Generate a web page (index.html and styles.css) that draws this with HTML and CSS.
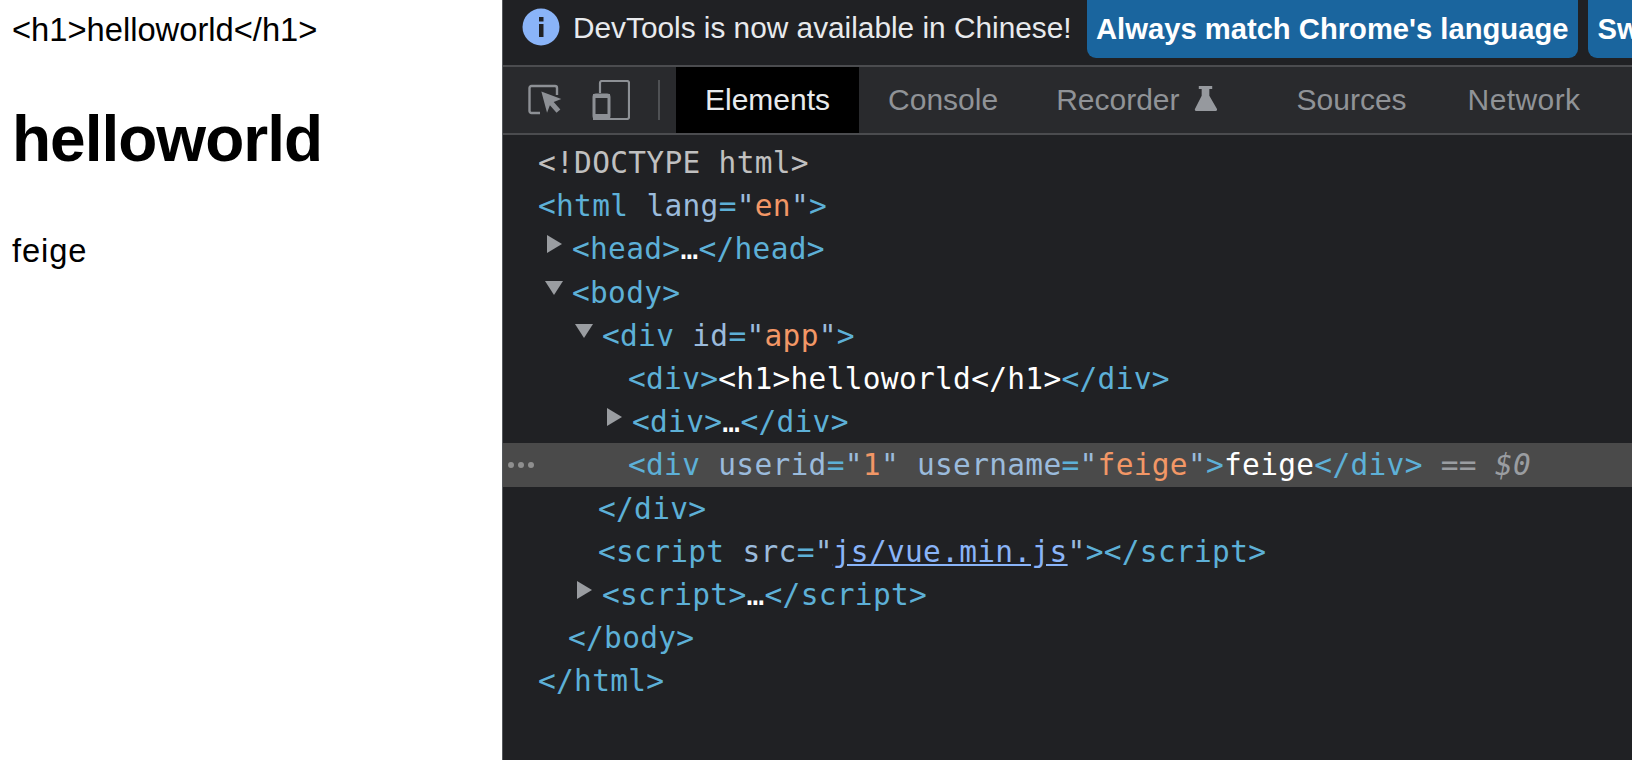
FILE: index.html
```html
<!DOCTYPE html>
<html lang="en">
<head>
<meta charset="utf-8">
<title>DevTools</title>
<link rel="stylesheet" href="styles.css">
</head>
<body>
<div class="app">
  <main class="page">
    <div class="page-line">&lt;h1&gt;helloworld&lt;/h1&gt;</div>
    <h1 class="page-title">helloworld</h1>
    <div class="page-line page-feige">feige</div>
  </main>
  <section class="devtools">
    <div class="infobar">
      <svg class="info-icon" viewBox="0 0 38 38" width="38" height="38"><circle cx="19" cy="19" r="18.5" fill="#8ab4f8"/><rect x="17" y="9" width="4.5" height="4.5" fill="#202124"/><rect x="17" y="16" width="4.5" height="13" fill="#202124"/></svg>
      <span class="info-text">DevTools is now available in Chinese!</span>
      <button class="info-btn first">Always match Chrome's language</button>
      <button class="info-btn">Switch DevTools to Chinese</button>
    </div>
    <div class="toolbar">
      <svg class="tool-icon" viewBox="0 0 36 34" width="36" height="34"><path d="M12 30H3.5a2 2 0 0 1-2-2V5a2 2 0 0 1 2-2H27a2 2 0 0 1 2 2v7" fill="none" stroke="#8d9095" stroke-width="2.4"/><path d="M13 11l21 8-8 3 7 8-4 3.5-7-8-3 8z" fill="#8d9095" transform="translate(1 -2) scale(.95)"/></svg>
      <svg class="tool-icon device" viewBox="0 0 38 40" width="38" height="40"><path d="M8 13V3a2 2 0 0 1 2-2h25a2 2 0 0 1 2 2v34a2 2 0 0 1-2 2H17" fill="none" stroke="#8d9095" stroke-width="2.2"/><rect x="2" y="15" width="15" height="23" rx="2" fill="none" stroke="#8d9095" stroke-width="3"/><rect x="1" y="34" width="17" height="6" fill="#8d9095"/><rect x="1" y="14" width="17" height="4" fill="#8d9095"/></svg>
      <span class="tool-sep"></span>
      <nav class="tabs">
        <span class="tab active">Elements</span>
        <span class="tab">Console</span>
        <span class="tab recorder">Recorder
          <svg class="flask" viewBox="0 0 24 26" width="23" height="25"><path d="M5 0h14v3h-3v7l8 14a1.5 1.5 0 0 1-1 2H2a1.5 1.5 0 0 1-1-2l7-14V3H5z" fill="#96999e"/></svg>
        </span>
        <span class="tab">Sources</span>
        <span class="tab network">Network</span>
      </nav>
    </div>
    <div class="tree">
      <div class="row l0"><span class="doc">&lt;!DOCTYPE html&gt;</span></div>
      <div class="row l0"><span class="t">&lt;html</span> <span class="a">lang</span><span class="t">=</span><span class="a">"</span><span class="v">en</span><span class="a">"</span><span class="t">&gt;</span></div>
      <div class="row l1"><span class="arrow right"></span><span class="t">&lt;head&gt;</span><span class="w">…</span><span class="t">&lt;/head&gt;</span></div>
      <div class="row l1"><span class="arrow down"></span><span class="t">&lt;body&gt;</span></div>
      <div class="row l2"><span class="arrow down"></span><span class="t">&lt;div</span> <span class="a">id</span><span class="t">=</span><span class="a">"</span><span class="v">app</span><span class="a">"</span><span class="t">&gt;</span></div>
      <div class="row l3"><span class="t">&lt;div&gt;</span><span class="w">&lt;h1&gt;helloworld&lt;/h1&gt;</span><span class="t">&lt;/div&gt;</span></div>
      <div class="row l3"><span class="arrow right"></span><span class="t">&lt;div&gt;</span><span class="w">…</span><span class="t">&lt;/div&gt;</span></div>
      <div class="row l3 selected"><svg class="gutter" viewBox="0 0 28 8" width="28" height="8"><circle cx="4" cy="4" r="3" fill="#8f8f8f"/><circle cx="14" cy="4" r="3" fill="#8f8f8f"/><circle cx="24" cy="4" r="3" fill="#8f8f8f"/></svg><span class="t">&lt;div</span> <span class="a">userid</span><span class="t">=</span><span class="a">"</span><span class="v">1</span><span class="a">"</span> <span class="a">username</span><span class="t">=</span><span class="a">"</span><span class="v">feige</span><span class="a">"</span><span class="t">&gt;</span><span class="w">feige</span><span class="t">&lt;/div&gt;</span> <span class="eq">==</span> <span class="eq dollar">$0</span></div>
      <div class="row l2"><span class="t">&lt;/div&gt;</span></div>
      <div class="row l2"><span class="t">&lt;script</span> <span class="a">src</span><span class="t">=</span><span class="a">"</span><a class="link">js/vue.min.js</a><span class="a">"</span><span class="t">&gt;&lt;/script&gt;</span></div>
      <div class="row l2"><span class="arrow right"></span><span class="t">&lt;script&gt;</span><span class="w">…</span><span class="t">&lt;/script&gt;</span></div>
      <div class="row l1"><span class="t">&lt;/body&gt;</span></div>
      <div class="row l0"><span class="t">&lt;/html&gt;</span></div>
    </div>
  </section>
</div>
</body>
</html>
```

FILE: styles.css
```css
* { box-sizing: border-box; }
html, body { margin: 0; height: 100%; overflow: hidden; }
body { background: #fff; font-family: "Liberation Sans", Arial, sans-serif; }

.app { display: flex; width: 1632px; height: 760px; }

.page { width: 502px; flex: none; padding: 11px 0 0 12px; color: #000; background: #fff; }
.page-line { font-size: 32.7px; line-height: 37px; }
.page-title { margin: 54px 0 0; font-size: 64px; line-height: 74px; font-weight: 700; letter-spacing: -1px; }
.page-feige { margin-top: 56px; letter-spacing: .9px; }

.devtools { flex: 1; min-width: 0; display: flex; flex-direction: column; background: #202124; border-left: 1px solid #55585c; overflow: hidden; }

.infobar { height: 67px; flex: none; display: flex; align-items: flex-start; padding-left: 19px; background: #202124; border-bottom: 2px solid #4b4c4f; overflow: hidden; white-space: nowrap; }
.info-icon { flex: none; margin-top: 8px; }
.info-text { margin: 8px 0 0 13px; font-size: 29.8px; line-height: 40px; color: #e8eaed; }
.info-btn { flex: none; height: 58px; margin: 0 0 0 15px; padding: 0 9.5px; border: 0; border-radius: 0 0 9px 9px; background: #1a659e; color: #fff; font: 700 29.2px/54px "Liberation Sans", Arial, sans-serif; }
.info-btn + .info-btn { margin-left: 10px; }

.toolbar { height: 68px; flex: none; display: flex; align-items: center; padding-left: 25px; background: #292a2d; border-bottom: 2px solid #4b4c4f; }
.tool-icon { flex: none; }
.tool-icon.device { margin-left: 28px; }
.tool-sep { width: 2px; height: 40px; margin-left: 28px; background: #4f5154; flex: none; }
.tabs { display: flex; align-self: stretch; margin-left: 16px; }
.tab { display: flex; align-items: center; padding: 0 29px; font-size: 30px; color: #909397; white-space: nowrap; }
.tab.active { background: #000; color: #e8eaed; }
.tab.network { margin-left: 3px; letter-spacing: .4px; }
.flask { margin-left: 14px; margin-right: 22px; margin-top: -4px; }

.tree { flex: 1; padding-top: 6px; background: #202124; font-family: "DejaVu Sans Mono", "Liberation Mono", monospace; font-size: 29.5px; letter-spacing: .3px; }
.row { position: relative; height: 43.2px; line-height: 45px; white-space: pre; color: #e8eaed; }
.l0 { padding-left: 35px; }
.l1 { padding-left: 65px; }
.l2 { padding-left: 95px; }
.l3 { padding-left: 125px; }
.selected { background: #4a4a4a; }
.gutter { position: absolute; left: 4px; top: 18px; }
.doc { color: #c0c0c0; }
.t { color: #5db0d7; }
.a { color: #9bbbdc; }
.v { color: #f29766; }
.w { color: #fff; }
.eq { color: #9a9da1; }
.dollar { font-style: italic; }
.link { color: #8ab4f8; text-decoration: underline; }

.arrow { display: inline-block; width: 0; height: 0; border-style: solid; border-color: transparent; }
.arrow.right { border-width: 9px 0 9px 15px; border-left-color: #9a9da1; margin-left: -21px; margin-right: 10px; vertical-align: 6px; }
.arrow.down { border-width: 14px 9px 0 9px; border-top-color: #9a9da1; margin-left: -23px; margin-right: 9px; vertical-align: 8px; }
```
